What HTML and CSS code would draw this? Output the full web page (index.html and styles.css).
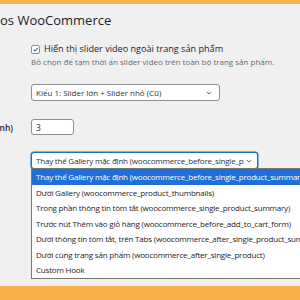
FILE: index.html
```html
<!DOCTYPE html>
<html lang="vi">
  <head>
    <meta charset="UTF-8" />
    <meta name="viewport" content="width=device-width, initial-scale=1.0" />
    <title>Cài đặt Videos WooCommerce</title>
    <link rel="stylesheet" href="styles.css">
  </head>
  <body>
    <!-- Thanh màu cam phía trên -->
    <div class="top-bar"></div>

    <div class="wrap">
      <h1 class="page-title">os WooCommerce</h1>

      <!-- Hiển thị slider ngoài trang sản phẩm -->
      <div class="row">
        <div class="row-label"></div>
        <div class="row-field">
          <label class="check-label">
            <span class="checkbox">
              <svg viewBox="0 0 10 10" width="9" height="9">
                <path d="M2 5.2 L4.2 7.3 L8.2 2.6" fill="none" stroke="#2271b1" stroke-width="1.5" />
              </svg>
            </span>
            Hiển thị slider video ngoài trang sản phẩm
          </label>
          <p class="desc">Bỏ chọn để tạm thời ẩn slider video trên toàn bộ trang sản phẩm.</p>
        </div>
      </div>

      <!-- Kiểu slider -->
      <div class="row row-style">
        <div class="row-label"></div>
        <div class="row-field">
          <div class="select select-style">
            <span class="select-text">Kiểu 1: Slider lớn + Slider nhỏ (Cũ)</span>
            <svg class="chevron" viewBox="0 0 8 5" width="6" height="4">
              <path d="M1 1 L4 4 L7 1" fill="none" stroke="#50575e" stroke-width="1.2" />
            </svg>
          </div>
        </div>
      </div>

      <!-- Số ảnh -->
      <div class="row row-number">
        <div class="row-label"><span>Số ảnh nhỏ hiển thị (mặc định)</span></div>
        <div class="row-field">
          <div class="text-input">3</div>
        </div>
      </div>

      <!-- Vị trí hiển thị (đang mở) -->
      <div class="row row-hook">
        <div class="row-label"></div>
        <div class="row-field">
          <div class="select-holder">
            <div class="select select-hook is-open">
              <span class="select-text">Thay thế Gallery mặc định (woocommerce_before_single_product_summary)</span>
              <svg class="chevron" viewBox="0 0 8 5" width="6" height="4">
                <path d="M1 1 L4 4 L7 1" fill="none" stroke="#50575e" stroke-width="1.2" />
              </svg>
            </div>
            <ul class="dropdown">
              <li class="selected">Thay thế Gallery mặc định (woocommerce_before_single_product_summary)</li>
              <li>Dưới Gallery (woocommerce_product_thumbnails)</li>
              <li>Trong phần thông tin tóm tắt (woocommerce_single_product_summary)</li>
              <li>Trước nút Thêm vào giỏ hàng (woocommerce_before_add_to_cart_form)</li>
              <li>Dưới thông tin tóm tắt, trên Tabs (woocommerce_after_single_product_summary)</li>
              <li>Dưới cùng trang sản phẩm (woocommerce_after_single_product)</li>
              <li>Custom Hook</li>
            </ul>
          </div>
        </div>
      </div>
    </div>

    <!-- Thanh màu cam phía dưới -->
    <div class="bottom-bar"></div>
  </body>
</html>
```

FILE: styles.css
```css
/* Reset cơ bản */
html,
body,
h1,
p,
ul {
  margin: 0;
  padding: 0;
}

* {
  box-sizing: border-box;
}

body {
  height: 300px;
  overflow: hidden;
  display: flex;
  flex-direction: column;
  background-color: #f0f0f1;
  color: #1d2327;
  font-family: 'Open Sans', 'Noto Sans', sans-serif;
  font-size: 8.5px;
}

.top-bar {
  height: 4px;
  background-color: #f9b24e;
}

.bottom-bar {
  height: 14px;
  background-color: #f9b04a;
}

.wrap {
  flex: 1;
  padding-top: 8px;
}

.page-title {
  font-size: 13px;
  font-weight: 400;
  line-height: 16px;
  white-space: nowrap;
}

/* Mỗi hàng: cột nhãn + cột trường */
.row {
  display: grid;
  grid-template-columns: 31px 1fr;
  align-items: center;
  margin-top: 15px;
}

.row-style {
  margin-top: 16px;
}

.row-number {
  margin-top: 18px;
}

.row-hook {
  margin-top: 17px;
}

/* Nhãn bị cắt bên trái, chỉ thấy phần cuối */
.row-label {
  display: flex;
  justify-content: flex-end;
  overflow: hidden;
  white-space: nowrap;
  font-weight: 600;
  padding-right: 18px;
}

.row-label span {
  flex-shrink: 0;
}

.check-label {
  display: flex;
  align-items: center;
  gap: 4px;
  line-height: 12px;
  font-size: 9.1px;
  white-space: nowrap;
}

.checkbox {
  display: flex;
  align-items: center;
  justify-content: center;
  width: 9px;
  height: 9px;
  border: 1px solid #8c8f94;
  border-radius: 2px;
  background: #fff;
}

.desc {
  margin-top: 1px;
  line-height: 12px;
  font-size: 8px;
  color: #646970;
  white-space: nowrap;
}

/* Ô chọn */
.select {
  display: flex;
  align-items: center;
  height: 17px;
  padding: 0 5px 0 4px;
  border: 1px solid #8c8f94;
  border-radius: 3px;
  background: #fff;
  color: #2c3338;
  font-size: 8px;
}

.select-text {
  flex: 1;
  overflow: hidden;
  white-space: nowrap;
}

.chevron {
  flex-shrink: 0;
  margin-left: 2px;
}

.select-style {
  width: 189px;
}

.select-style .chevron {
  margin-right: 2px;
}

.select-hook {
  width: 227px;
  letter-spacing: -0.2px;
}

.select-hook.is-open {
  border-color: #2271b1;
  box-shadow: 0 0 0 0.5px #2271b1;
}

.text-input {
  display: flex;
  align-items: center;
  width: 43px;
  height: 16px;
  padding-left: 4px;
  border: 1px solid #8c8f94;
  border-radius: 3px;
  background: #fff;
  color: #2c3338;
}

/* Danh sách xổ xuống */
.select-holder {
  position: relative;
}

.dropdown {
  position: absolute;
  top: 16px;
  left: 0;
  width: 300px;
  list-style: none;
  background: #fff;
  border: 1px solid #767676;
  font-size: 8px;
  letter-spacing: -0.2px;
  z-index: 2;
}

.dropdown li {
  height: 15.5px;
  line-height: 15.5px;
  padding-left: 4px;
  white-space: nowrap;
  overflow: hidden;
  color: #1d2327;
}

.dropdown li.selected {
  background-color: #1f6fd6;
  color: #fff;
}
```
